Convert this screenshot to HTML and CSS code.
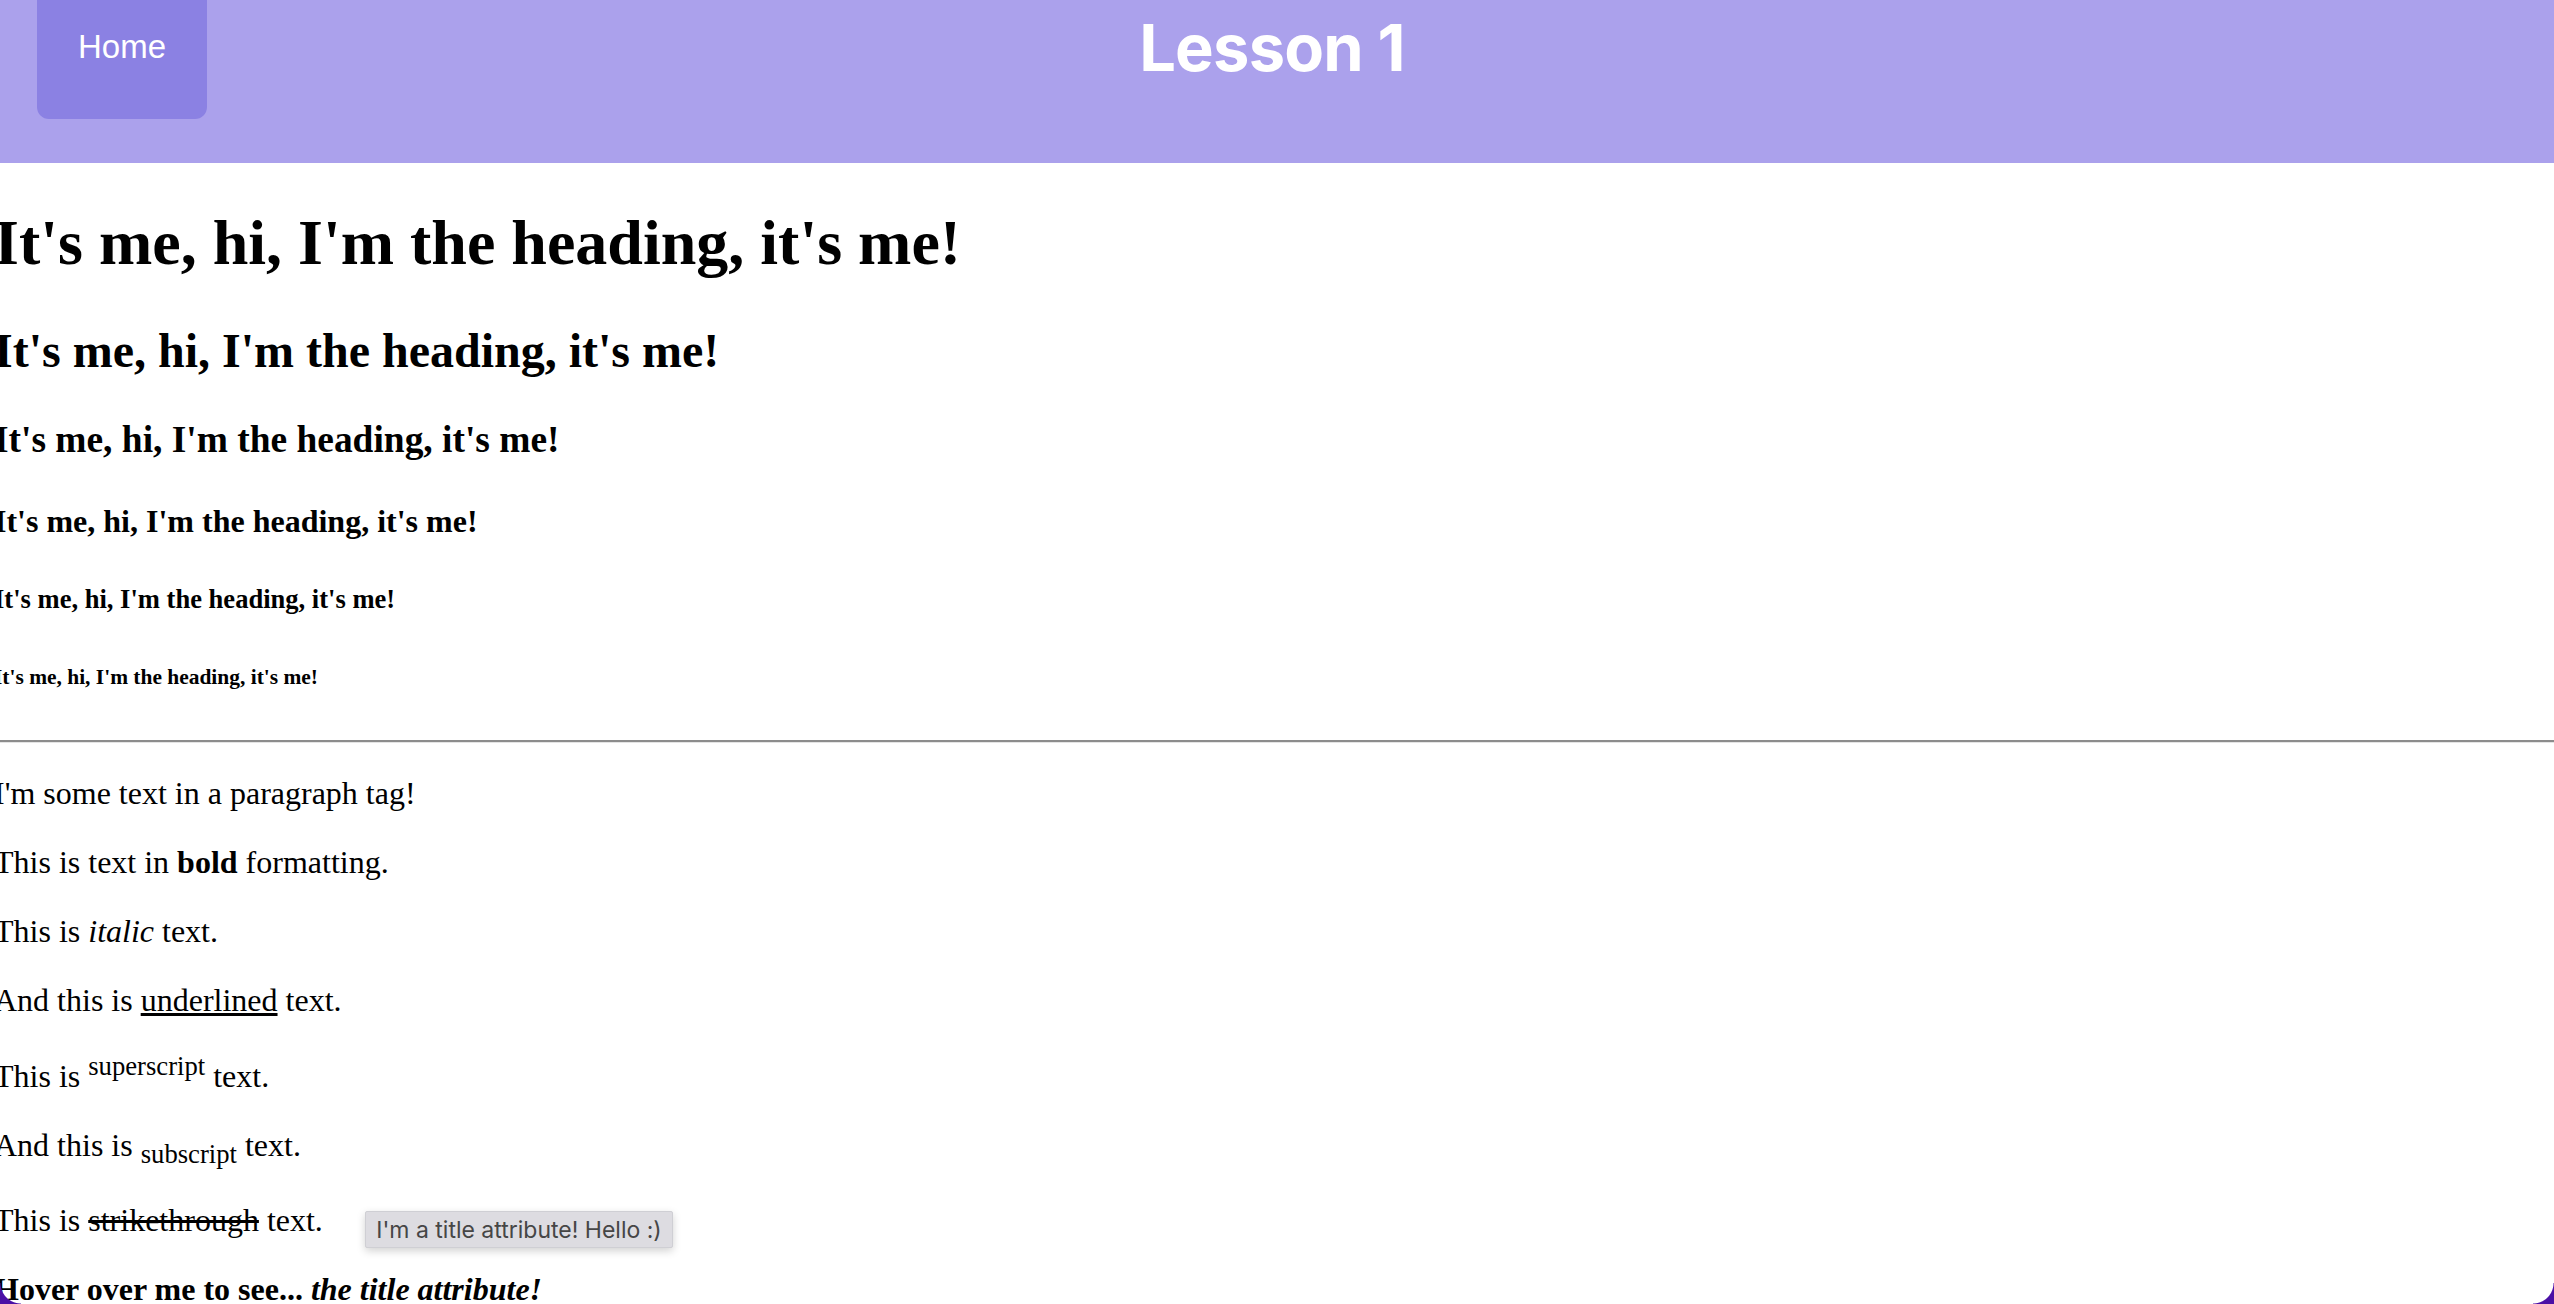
FILE: index.html
```html
<!DOCTYPE html>
<html lang="en">
<head>
<meta charset="utf-8">
<title>Lesson 1</title>
<link rel="stylesheet" href="styles.css">
</head>
<body>
<header class="topbar">
  <a class="home-btn">Home</a>
  <div class="page-title">Lesson 1</div>
  <div class="spacer"></div>
</header>
<main class="content">
  <h1>It's me, hi, I'm the heading, it's me!</h1>
  <h2>It's me, hi, I'm the heading, it's me!</h2>
  <h3>It's me, hi, I'm the heading, it's me!</h3>
  <h4>It's me, hi, I'm the heading, it's me!</h4>
  <h5>It's me, hi, I'm the heading, it's me!</h5>
  <h6>It's me, hi, I'm the heading, it's me!</h6>
  <hr class="rule">
  <p>I'm some text in a paragraph tag!</p>
  <p>This is text in <b>bold</b> formatting.</p>
  <p>This is <i>italic</i> text.</p>
  <p>And this is <u>underlined</u> text.</p>
  <p>This is <sup>superscript</sup> text.</p>
  <p>And this is <sub>subscript</sub> text.</p>
  <p>This is <s>strikethrough</s> text.</p>
  <p><b title="I'm a title attribute! Hello :)">Hover over me to see... <i>the title attribute!</i></b></p>
</main>
<div class="tooltip">I'm a title attribute! Hello :)</div>
<div class="corner corner-left"></div>
<div class="corner corner-right"></div>
</body>
</html>
```
FILE: styles.css
```css
html {
  background: #ffffff;
}
body {
  margin: 0;
  font-family: "Liberation Serif", "Times New Roman", serif;
  font-size: 32px;
  color: #000;
  background: #fff;
}
.topbar {
  display: grid;
  grid-template-columns: 1fr auto 1fr;
  align-items: start;
  height: 163px;
  background: #aba1ec;
}
.home-btn {
  justify-self: start;
  margin-left: 37px;
  width: 170px;
  box-sizing: border-box;
  padding: 28px 0 53px;
  text-align: center;
  font-family: "Liberation Sans", Arial, sans-serif;
  font-size: 33px;
  line-height: 38px;
  color: #fff;
  background: #8b81e3;
  border-radius: 0 0 12px 12px;
  cursor: pointer;
}
.page-title {
  margin-top: 15px;
  margin-right: 10px;
  font-family: Inter, "Liberation Sans", sans-serif;
  font-weight: 700;
  font-size: 65px;
  line-height: 66px;
  color: #fff;
  letter-spacing: -0.8px;
}
.content {
  margin-left: -6px;
}
.rule {
  margin: 16px 0 16px 6px;
  height: 0;
  border: 0;
  border-top: 2px solid #8c8c8c;
  border-bottom: 1px solid #e4e4e4;
}
.tooltip {
  position: absolute;
  left: 365px;
  top: 1211px;
  width: 308px;
  height: 37px;
  box-sizing: border-box;
  display: flex;
  align-items: center;
  justify-content: center;
  background: #dddce1;
  border: 1px solid #cfcfd4;
  border-radius: 2px;
  box-shadow: 0 3px 8px rgba(0, 0, 0, 0.18);
  font-family: Inter, "Noto Sans", sans-serif;
  font-size: 23px;
  color: #464646;
  white-space: nowrap;
}
.corner {
  position: fixed;
  bottom: 0;
  width: 21px;
  height: 21px;
}
.corner-left {
  left: 0;
  background: radial-gradient(circle at 100% 0, transparent 20px, #4a10a6 21px);
}
.corner-right {
  right: 0;
  background: radial-gradient(circle at 0 0, transparent 20px, #4a10a6 21px);
}
```
